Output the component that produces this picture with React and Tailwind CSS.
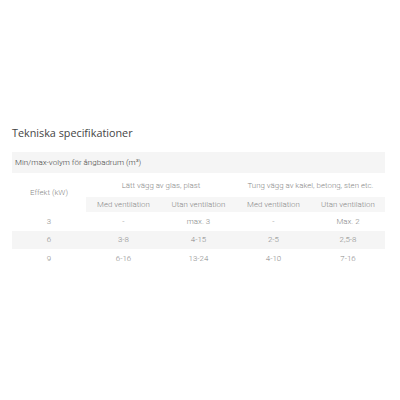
export default function App() {
  const rows = [
    ["3", "-", "max. 3", "-", "Max. 2"],
    ["6", "3-8", "4-15", "2-5", "2,5-8"],
    ["9", "6-16", "13-24", "4-10", "7-16"],
  ];
  return (
    <div className="w-[400px] h-[400px] bg-white pt-[125px] pl-[12px] pr-[15px]" style={{ fontFamily: "Roboto, 'Noto Sans', sans-serif" }}>
      <h2 className="text-[10.8px] leading-[16px] text-[#444] font-normal" style={{ fontFamily: "'Open Sans', 'Noto Sans', sans-serif" }}>
        Tekniska specifikationer
      </h2>
      <table className="mt-[11px] w-[373px] table-fixed border-collapse text-[7.9px] font-light text-[#888]">
        <colgroup>
          <col className="w-[74px]" />
          <col className="w-[75px]" />
          <col className="w-[75px]" />
          <col className="w-[75px]" />
          <col className="w-[74px]" />
        </colgroup>
        <tbody>
          <tr className="h-[21px] bg-[#f5f5f5]">
            <td colSpan={5} className="pl-[3px] text-left text-[8px] font-light text-[#444]">
              Min/max-volym för ångbadrum (m³)
            </td>
          </tr>
          <tr className="h-[24px]">
            <td rowSpan={2} className="text-center align-middle">Effekt (kW)</td>
            <td colSpan={2} className="text-center pt-[1px]">Lätt vägg av glas, plast</td>
            <td colSpan={2} className="text-center pt-[1px]">Tung vägg av kakel, betong, sten etc.</td>
          </tr>
          <tr className="h-[15px] bg-[#f6f6f6]">
            <td className="text-center bg-[#f6f6f6]">Med ventilation</td>
            <td className="text-center">Utan ventilation</td>
            <td className="text-center">Med ventilation</td>
            <td className="text-center">Utan ventilation</td>
          </tr>
          {rows.map((r, i) => (
            <tr key={i} className={i === 1 ? "h-[18px] bg-[#f5f5f5]" : "h-[19px]"}>
              {r.map((c, j) => (
                <td key={j} className="text-center">{c}</td>
              ))}
            </tr>
          ))}
        </tbody>
      </table>
    </div>
  );
}
